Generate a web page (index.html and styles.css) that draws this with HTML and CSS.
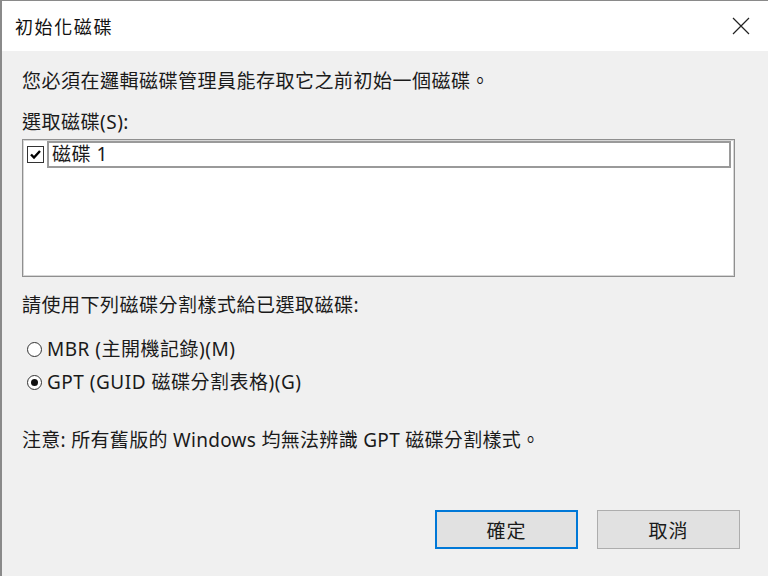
FILE: index.html
```html
<!DOCTYPE html>
<html lang="zh-Hant">
<head>
<meta charset="utf-8">
<title>初始化磁碟</title>
<link rel="stylesheet" href="styles.css">
</head>
<body>
<div class="window">
  <div class="titlebar">
    <span class="title">初始化磁碟</span>
    <svg class="close" width="18" height="18" viewBox="0 0 18 18"><path d="M1 1 L17 17 M17 1 L1 17" stroke="#222" stroke-width="1.2" fill="none"/></svg>
  </div>
  <div class="content">
    <p class="line intro">您必須在邏輯磁碟管理員能存取它之前初始一個磁碟。</p>
    <p class="line label">選取磁碟(S):</p>
    <div class="listbox">
      <div class="row">
        <span class="check"><svg width="13" height="13" viewBox="0 0 13 13"><path d="M2 6.5 L5 9.5 L11 3" stroke="#000" stroke-width="2.4" fill="none"/></svg></span>
        <span class="item">磁碟 1</span>
      </div>
    </div>
    <p class="line style-label">請使用下列磁碟分割樣式給已選取磁碟:</p>
    <div class="radios">
      <div class="radio-row"><span class="radio"></span><span>MBR (主開機記錄)(M)</span></div>
      <div class="radio-row"><span class="radio on"></span><span>GPT (GUID 磁碟分割表格)(G)</span></div>
    </div>
    <p class="line note">注意: 所有舊版的 Windows 均無法辨識 GPT 磁碟分割樣式。</p>
    <div class="buttons">
      <button class="btn primary">確定</button>
      <button class="btn">取消</button>
    </div>
  </div>
</div>
</body>
</html>
```
FILE: styles.css
```css
* { box-sizing: border-box; }
html, body { margin: 0; padding: 0; }
body {
  width: 768px;
  height: 576px;
  overflow: hidden;
  background: #f0f0f0;
  font-family: "Noto Sans", "Noto Sans CJK TC", sans-serif;
  color: #1a1a1a;
}
.window {
  height: 576px;
  border-left: 2px solid #8a8a8a;
  border-top: 1px solid #8a8a8a;
  background: #f0f0f0;
}
.titlebar {
  height: 50px;
  background: #ffffff;
  display: flex;
  align-items: center;
  justify-content: space-between;
  padding: 0 18px 0 13px;
}
.title {
  font-size: 18px;
  letter-spacing: 1.6px;
  color: #111;
}
.close { display: block; }
.content {
  padding: 18px 0 0 20px;
}
.line {
  margin: 0;
  font-size: 19px;
  line-height: 24px;
  letter-spacing: 0.5px;
}
.label { margin-top: 17px; }
.listbox {
  margin-top: 5px;
  width: 713px;
  height: 138px;
  background: #ffffff;
  border: 1px solid #8f8f8f;
  box-shadow: inset 0 0 0 1px #d6d6d6;
  padding: 1px 3px 0 4px;
}
.row {
  display: flex;
  align-items: center;
  gap: 3px;
}
.check {
  width: 17px;
  height: 17px;
  border: 1px solid #333;
  background: #fff;
  display: flex;
  align-items: center;
  justify-content: center;
  flex: none;
}
.check svg { display: block; }
.item {
  flex: 1;
  height: 27px;
  border: 2px solid #9a9a9a;
  font-size: 19px;
  line-height: 23px;
  padding-left: 3px;
  letter-spacing: 0.5px;
}
.style-label { margin-top: 16px; }
.radios {
  margin-top: 20px;
  display: flex;
  flex-direction: column;
  gap: 9px;
  padding-left: 5px;
}
.radio-row {
  display: flex;
  align-items: center;
  gap: 5px;
  font-size: 19px;
  line-height: 24px;
  letter-spacing: 0.5px;
}
.radio {
  width: 15px;
  height: 15px;
  border: 1px solid #333;
  border-radius: 50%;
  background: #fff;
  position: relative;
  flex: none;
}
.radio.on::after {
  content: "";
  position: absolute;
  left: 3px;
  top: 3px;
  width: 7px;
  height: 7px;
  border-radius: 50%;
  background: #111;
}
.note { margin-top: 34px; letter-spacing: 0.3px; }
.buttons {
  margin-top: 58px;
  display: flex;
  justify-content: flex-end;
  gap: 19px;
  padding-right: 28px;
}
.btn {
  width: 143px;
  height: 39px;
  background: #e1e1e1;
  border: 1px solid #adadad;
  font-family: "Noto Sans CJK TC", sans-serif;
  font-size: 19px;
  letter-spacing: 1px;
  color: #1a1a1a;
  padding: 0;
}
.btn.primary {
  border: 2px solid #0078d7;
}
```
